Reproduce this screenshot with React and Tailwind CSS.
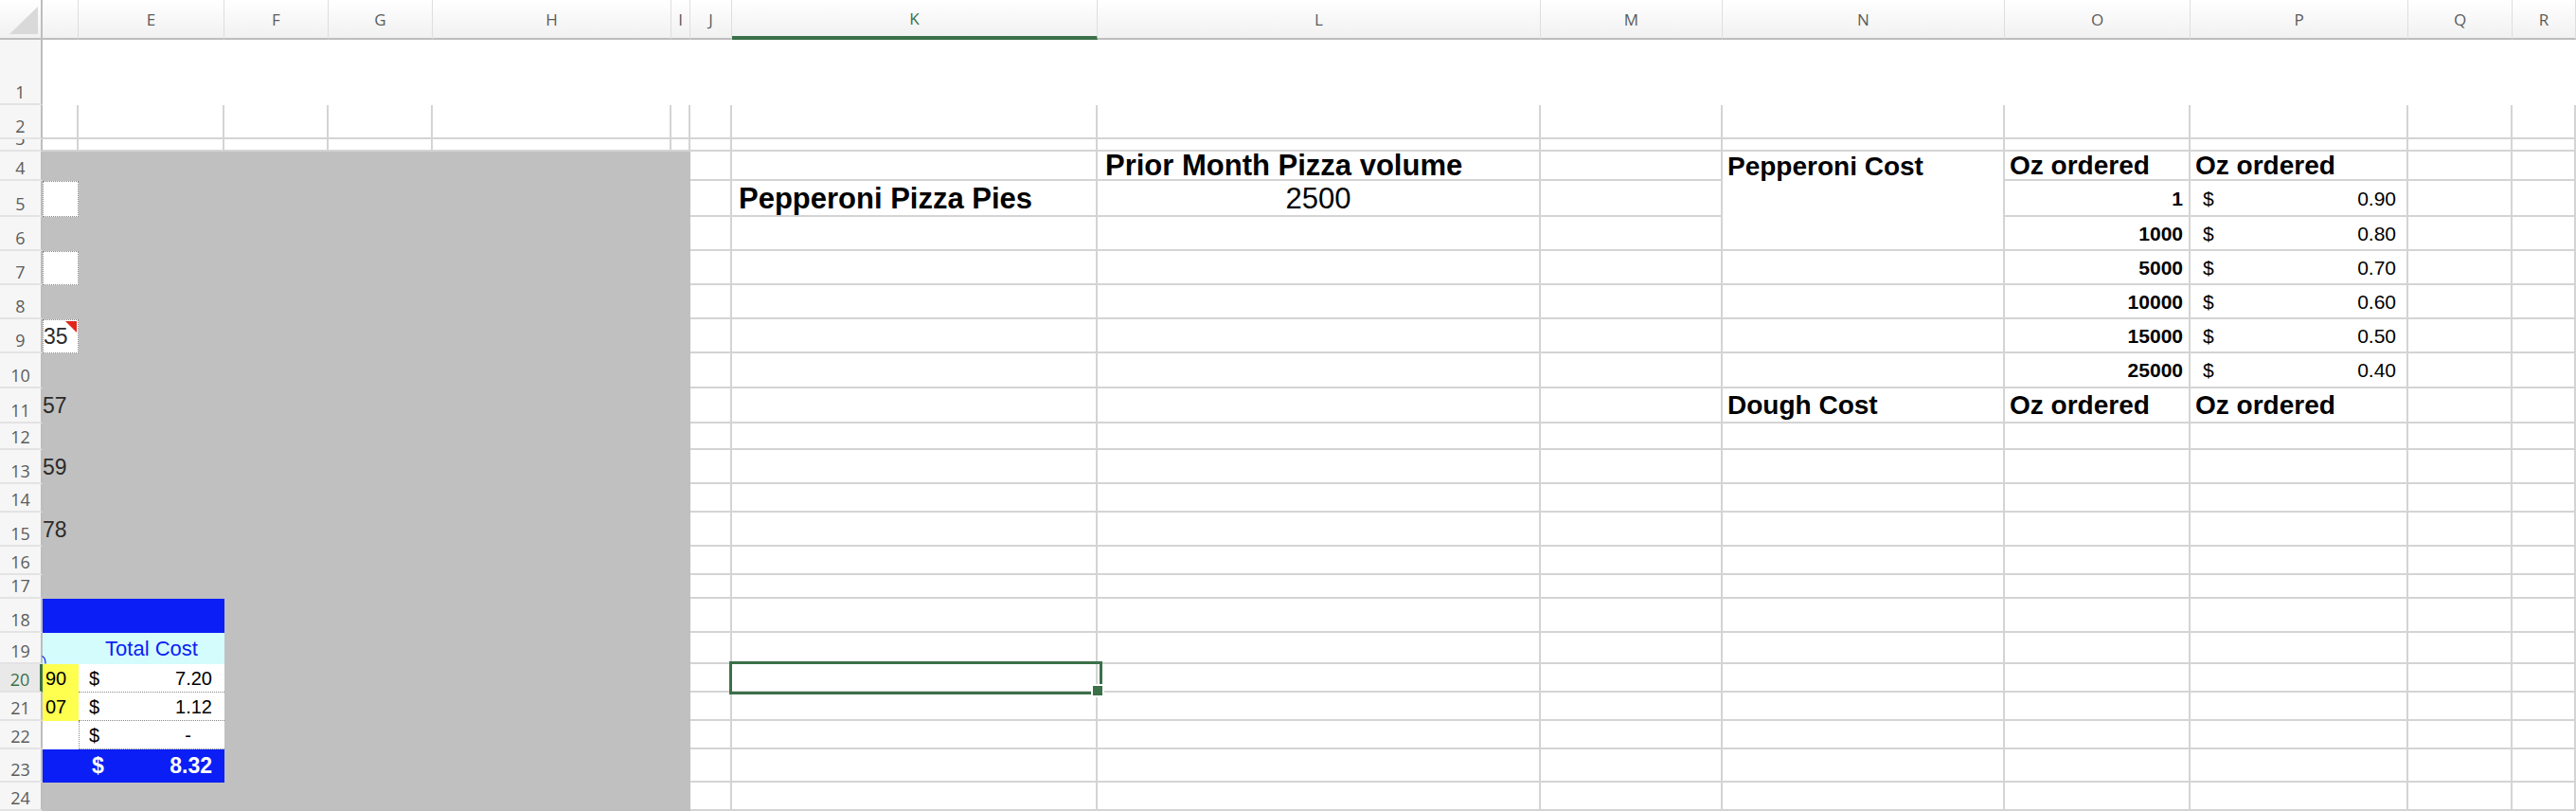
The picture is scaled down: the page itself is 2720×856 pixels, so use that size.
import React from 'react';

// Sheet geometry
const columns = [
  { id: 'D', label: '', w: 'w-[38px]' },
  { id: 'E', label: 'E', w: 'w-[154px]' },
  { id: 'F', label: 'F', w: 'w-[110px]' },
  { id: 'G', label: 'G', w: 'w-[110px]' },
  { id: 'H', label: 'H', w: 'w-[252px]' },
  { id: 'I', label: 'I', w: 'w-[20px]' },
  { id: 'J', label: 'J', w: 'w-[44px]' },
  { id: 'K', label: 'K', w: 'w-[386px]' },
  { id: 'L', label: 'L', w: 'w-[468px]' },
  { id: 'M', label: 'M', w: 'w-[192px]' },
  { id: 'N', label: 'N', w: 'w-[298px]' },
  { id: 'O', label: 'O', w: 'w-[196px]' },
  { id: 'P', label: 'P', w: 'w-[230px]' },
  { id: 'Q', label: 'Q', w: 'w-[110px]' },
  { id: 'R', label: 'R', w: 'flex-1 min-w-[67px]' },
];

const rows = [
  { n: 1, h: 'h-[69px]' },
  { n: 2, h: 'h-[36px]' },
  { n: 3, h: 'h-[13px]' },
  { n: 4, h: 'h-[31px]' },
  { n: 5, h: 'h-[38px]' },
  { n: 6, h: 'h-[36px]' },
  { n: 7, h: 'h-[36px]' },
  { n: 8, h: 'h-[36px]' },
  { n: 9, h: 'h-[36px]' },
  { n: 10, h: 'h-[37px]' },
  { n: 11, h: 'h-[37px]' },
  { n: 12, h: 'h-[28px]' },
  { n: 13, h: 'h-[36px]' },
  { n: 14, h: 'h-[30px]' },
  { n: 15, h: 'h-[36px]' },
  { n: 16, h: 'h-[30px]' },
  { n: 17, h: 'h-[25px]' },
  { n: 18, h: 'h-[36px]' },
  { n: 19, h: 'h-[33px]' },
  { n: 20, h: 'h-[30px]' },
  { n: 21, h: 'h-[30px]' },
  { n: 22, h: 'h-[30px]' },
  { n: 23, h: 'h-[35px]' },
  { n: 24, h: 'h-[30px]' },
];

const ACTIVE_ROW = 20;
const ACTIVE_COL = 'K';

const GRID = 'border-r-2 border-b-2 border-[#d4d4d4] bg-white';
const GREY = 'bg-[#c0c0c0]';
const DOTTED = 'bg-white border border-dotted border-[#8a8a8a]';
const BLUE = 'bg-[#0a1ef5]';
const greyCols = ['D', 'E', 'F', 'G', 'H', 'I'];

const baseClass = (r, c) => {
  if (r === 1) return 'bg-white';
  if (r >= 4 && greyCols.includes(c)) return GREY;
  if (c === 'N' && (r === 4 || r === 5)) return 'border-r-2 border-[#d4d4d4] bg-white';
  return GRID;
};

const special = {
  D5: DOTTED,
  D7: DOTTED,
  D9: DOTTED,
  D18: BLUE,
  E18: BLUE,
  D19: 'bg-[#d4fcfc]',
  E19: 'bg-[#d4fcfc]',
  D20: 'bg-[#ffff4f]',
  D21: 'bg-[#ffff4f]',
  E20: 'bg-white border-b border-dotted border-[#8a8a8a]',
  E21: 'bg-white border-b border-dotted border-[#8a8a8a]',
  D22: 'bg-white',
  E22: 'bg-white border-b border-l border-dotted border-[#8a8a8a]',
  D23: BLUE,
  E23: BLUE,
};

const BigBold = ({ children, className = '' }) => (
  <span className={`text-[31px] font-bold leading-none whitespace-nowrap ${className}`}>{children}</span>
);

const Label = ({ children }) => (
  <span className="pl-[5px] text-[28px] font-bold leading-none whitespace-nowrap">{children}</span>
);

const LeftNum = ({ children }) => (
  <span className="text-[23px] leading-none text-[#2b2b2b]">{children}</span>
);

const Money = ({ value, pr = 'pr-[11px]' }) => (
  <div className={`w-full flex justify-between pl-[13px] ${pr} text-[21px] leading-none`}>
    <span>$</span>
    <span>{value}</span>
  </div>
);

const OzQty = ({ children }) => (
  <span className="w-full text-right pr-[6px] text-[21px] font-bold leading-none">{children}</span>
);

const Selection = () => (
  <div className="absolute -left-[3px] -top-[3px] w-[394px] h-[35px] border-[3px] border-[#3b7049] z-10 pointer-events-none">
    <div className="absolute left-[379px] top-[21px] w-[14px] h-[14px] bg-[#3b7049] border-2 border-white" />
  </div>
);

const tiers = [
  ['1', '0.90'],
  ['1000', '0.80'],
  ['5000', '0.70'],
  ['10000', '0.60'],
  ['15000', '0.50'],
  ['25000', '0.40'],
];

const content = {
  D9: (
    <>
      <LeftNum>35</LeftNum>
      <svg className="absolute right-px top-px" width="12" height="12">
        <polygon points="0,0 12,0 12,12" fill="#e1261c" />
      </svg>
    </>
  ),
  D11: <LeftNum>57</LeftNum>,
  D13: <LeftNum>59</LeftNum>,
  D15: <LeftNum>78</LeftNum>,
  D19: (
    <svg className="absolute -left-px bottom-0" width="6" height="9">
      <path d="M0.5 0.5 A5 8 0 0 1 4 8.5" fill="none" stroke="#0a1ef5" strokeWidth="1.2" />
    </svg>
  ),
  E19: <span className="w-full text-center text-[22px] leading-none text-[#0a1ef5]">Total Cost</span>,
  D20: <span className="pl-[3px] text-[20px] leading-none">90</span>,
  D21: <span className="pl-[3px] text-[20px] leading-none">07</span>,
  E20: (
    <div className="w-full flex justify-between pl-[11px] pr-[13px] text-[20px] leading-none">
      <span>$</span>
      <span>7.20</span>
    </div>
  ),
  E21: (
    <div className="w-full flex justify-between pl-[11px] pr-[13px] text-[20px] leading-none">
      <span>$</span>
      <span>1.12</span>
    </div>
  ),
  E22: (
    <div className="w-full flex justify-between pl-[10px] pr-[35px] text-[20px] leading-none">
      <span>$</span>
      <span>-</span>
    </div>
  ),
  E23: (
    <div className="w-full flex justify-between pl-[14px] pr-[13px] text-[23px] font-bold leading-none text-white">
      <span>$</span>
      <span>8.32</span>
    </div>
  ),
  L4: <BigBold className="pl-[8px]">Prior Month Pizza volume</BigBold>,
  K5: <BigBold className="pl-[7px]">Pepperoni Pizza Pies</BigBold>,
  L5: <span className="w-full text-center text-[31px] leading-none">2500</span>,
  N4: <Label>Pepperoni Cost</Label>,
  O4: <Label>Oz ordered</Label>,
  P4: <Label>Oz ordered</Label>,
  N11: <Label>Dough Cost</Label>,
  O11: <Label>Oz ordered</Label>,
  P11: <Label>Oz ordered</Label>,
  K20: <Selection />,
};

tiers.forEach(([qty, price], i) => {
  content[`O${i + 5}`] = <OzQty>{qty}</OzQty>;
  content[`P${i + 5}`] = <Money value={price} />;
});

const HeaderRow = () => (
  <div className="flex h-[42px]">
    <div className="w-[45px] shrink-0 relative bg-linear-to-b from-white to-[#f1f1f1] border-r-2 border-b-2 border-[#bdbdbd]">
      <svg className="absolute left-[10px] top-[7px]" width="30" height="29">
        <polygon points="0,29 30,0 30,29" fill="#d9d9d9" />
      </svg>
    </div>
    {columns.map((c) => (
      <div
        key={c.id}
        className={`${c.w} shrink-0 flex items-center justify-center bg-linear-to-b from-white to-[#f1f1f1] border-r border-[#dedede] font-['Open_Sans',sans-serif] text-[17px] leading-none ${
          c.id === ACTIVE_COL
            ? 'text-[#3b7049] border-b-4 border-b-[#3b7049]'
            : 'text-[#5c5c5c] border-b-2 border-b-[#bdbdbd]'
        }`}
      >
        {c.label}
      </div>
    ))}
  </div>
);

const SheetRow = ({ row }) => {
  const active = row.n === ACTIVE_ROW;
  return (
    <div className={`flex ${row.h}`}>
      <div
        className={`w-[45px] shrink-0 overflow-hidden flex items-end justify-center pb-[3px] border-b-2 border-[#e3e3e3] font-['Open_Sans',sans-serif] text-[18px] leading-none ${
          active
            ? 'bg-[#e9e9e9] text-[#3b7049] border-r-[3px] border-r-[#3b7049]'
            : 'bg-[#f6f6f6] text-[#5c5c5c] border-r-2 border-r-[#bdbdbd]'
        }`}
      >
        {row.n}
      </div>
      {columns.map((c) => {
        const key = `${c.id}${row.n}`;
        const cls = special[key] ?? baseClass(row.n, c.id);
        return (
          <div key={key} className={`${c.w} shrink-0 relative flex items-center ${cls}`}>
            {content[key]}
          </div>
        );
      })}
    </div>
  );
};

export default function App() {
  return (
    <div className="w-[2720px] h-[856px] overflow-hidden bg-white text-black font-['Liberation_Sans',Arial,sans-serif]">
      <HeaderRow />
      {rows.map((r) => (
        <SheetRow key={r.n} row={r} />
      ))}
    </div>
  );
}
